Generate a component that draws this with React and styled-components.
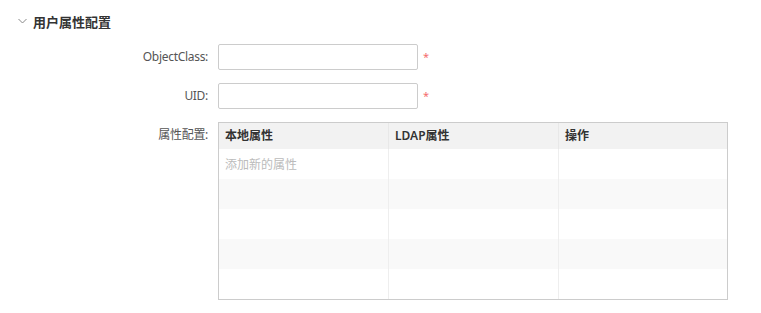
import { styled, createGlobalStyle } from "styled-components"

const GlobalStyle = createGlobalStyle`
    body {
        margin: 0;
        background: #fff;
        font-family: "Noto Sans", "Noto Sans CJK SC", sans-serif;
        font-size: 12px;
        color: #333;
    }
`

const Section = styled.section`
    width: 761px;
    height: 313px;
    box-sizing: border-box;
`

const SectionHeader = styled.header`
    display: flex;
    align-items: center;
    gap: 6px;
    height: 42px;
    padding-left: 18px;
    box-sizing: border-box;
`

const SectionTitle = styled.h3`
    margin: 0;
    font-size: 13px;
    font-weight: 700;
    color: #333;
    font-family: "Noto Sans CJK SC", sans-serif;
`

const Form = styled.div`
    display: flex;
    flex-direction: column;
    gap: 13px;
    padding-top: 2px;
`

const FormRow = styled.div`
    display: flex;
    align-items: ${p => (p.$top ? "flex-start" : "center")};
    gap: 10px;
`

const Label = styled.label`
    width: 208px;
    text-align: right;
    color: #555;
    font-size: 12px;
    line-height: 26px;
    letter-spacing: -0.3px;
    font-family: "Noto Sans", "Noto Sans CJK SC", sans-serif;
`

const Input = styled.input`
    width: 200px;
    height: 26px;
    box-sizing: border-box;
    border: 1px solid #ccc;
    border-radius: 2px;
    outline: none;
    padding: 0 6px;
    font-size: 12px;
`

const Required = styled.span`
    color: #f56c6c;
    font-size: 11px;
    margin-left: -5px;
    margin-top: -2px;
`

const Table = styled.div`
    width: 510px;
    box-sizing: border-box;
    border: 1px solid #ccc;
    display: grid;
    grid-template-columns: 169px 170px 1fr;
`

const HeadCell = styled.div`
    height: 26px;
    line-height: 26px;
    padding: 0 6px;
    background: #f2f2f2;
    font-weight: 600;
    color: #333;
    font-family: "Noto Sans", "Noto Sans CJK SC", sans-serif;
    border-left: ${p => (p.$first ? "none" : "1px solid #e8e8e8")};
`

const Cell = styled.div`
    height: 30px;
    line-height: 30px;
    padding: 0 6px;
    background: ${p => (p.$stripe ? "#f9f9f9" : "#fff")};
    color: #bbb;
    border-left: ${p => (p.$first ? "none" : "1px solid #eee")};
    font-family: "Noto Sans CJK SC", sans-serif;
`

const Chevron = () => (
    <svg width="9" height="6" viewBox="0 0 9 6">
        <path d="M0.5 1 L4.5 5 L8.5 1" fill="none" stroke="#888" strokeWidth="1" />
    </svg>
)

const columns = ["本地属性", "LDAP属性", "操作"]
const rows = [0, 1, 2, 3, 4]

export default function App() {
    return (
        <Section>
            <GlobalStyle />
            <SectionHeader>
                <Chevron />
                <SectionTitle>用户属性配置</SectionTitle>
            </SectionHeader>
            <Form>
                <FormRow>
                    <Label>ObjectClass:</Label>
                    <Input />
                    <Required>*</Required>
                </FormRow>
                <FormRow>
                    <Label>UID:</Label>
                    <Input />
                    <Required>*</Required>
                </FormRow>
                <FormRow $top>
                    <Label>属性配置:</Label>
                    <Table>
                        {columns.map((c, i) => (
                            <HeadCell key={c} $first={i === 0}>{c}</HeadCell>
                        ))}
                        {rows.map(r =>
                            columns.map((c, i) => (
                                <Cell key={r + c} $first={i === 0} $stripe={r % 2 === 1}>
                                    {r === 0 && i === 0 ? "添加新的属性" : ""}
                                </Cell>
                            ))
                        )}
                    </Table>
                </FormRow>
            </Form>
        </Section>
    )
}
